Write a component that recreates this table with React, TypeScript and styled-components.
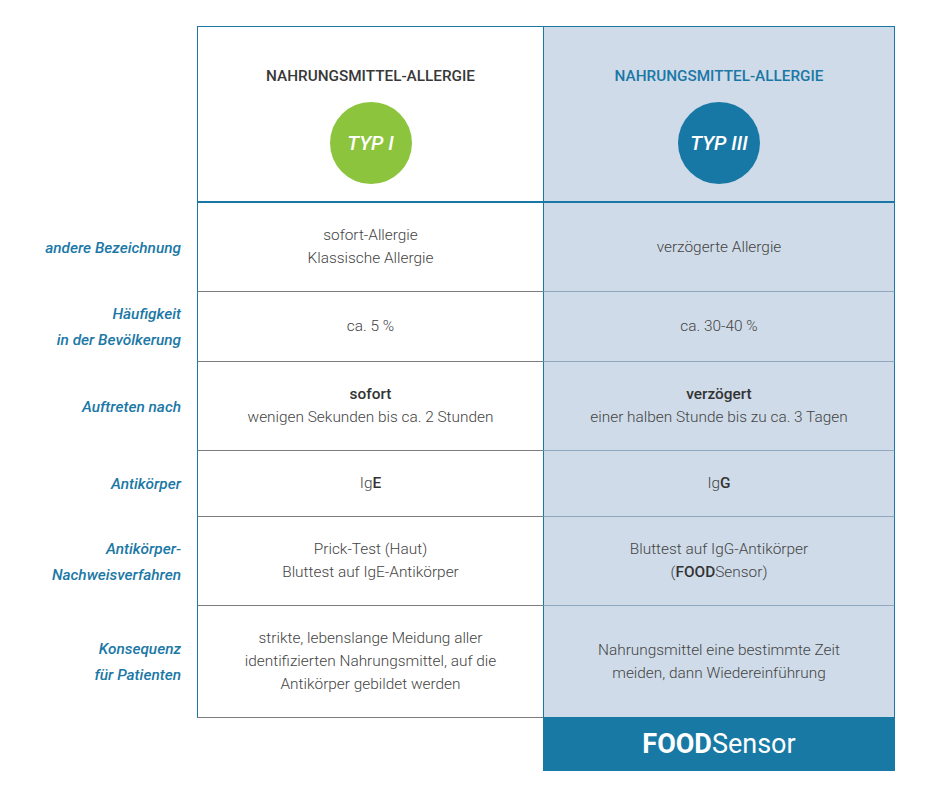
import styled, { createGlobalStyle } from "styled-components";

const BLUE = "#1b78a6";
const LIGHT = "#cfdbe8";
const TEXT = "#444444";

const GlobalStyle = createGlobalStyle`
  html, body {
    margin: 0;
    padding: 0;
    background: #ffffff;
  }
  body {
    font-family: Roboto, "Liberation Sans", sans-serif;
  }
`;

type Row = {
  label: string[];
  left: React.ReactNode;
  right: React.ReactNode;
};

const rows: Row[] = [
  {
    label: ["andere Bezeichnung"],
    left: (
      <>
        sofort-Allergie
        <br />
        Klassische Allergie
      </>
    ),
    right: "verzögerte Allergie",
  },
  {
    label: ["Häufigkeit", "in der Bevölkerung"],
    left: "ca. 5 %",
    right: "ca. 30-40 %",
  },
  {
    label: ["Auftreten nach"],
    left: (
      <>
        <Strong>sofort</Strong>
        <br />
        wenigen Sekunden bis ca. 2 Stunden
      </>
    ),
    right: (
      <>
        <Strong>verzögert</Strong>
        <br />
        einer halben Stunde bis zu ca. 3 Tagen
      </>
    ),
  },
  {
    label: ["Antikörper"],
    left: (
      <>
        Ig<Strong>E</Strong>
      </>
    ),
    right: (
      <>
        Ig<Strong>G</Strong>
      </>
    ),
  },
  {
    label: ["Antikörper-", "Nachweisverfahren"],
    left: (
      <>
        Prick-Test (Haut)
        <br />
        Bluttest auf IgE-Antikörper
      </>
    ),
    right: (
      <>
        Bluttest auf IgG-Antikörper
        <br />(<Strong>FOOD</Strong>Sensor)
      </>
    ),
  },
  {
    label: ["Konsequenz", "für Patienten"],
    left: (
      <>
        strikte, lebenslange Meidung aller
        <br />
        identifizierten Nahrungsmittel, auf die
        <br />
        Antikörper gebildet werden
      </>
    ),
    right: (
      <>
        Nahrungsmittel eine bestimmte Zeit
        <br />
        meiden, dann Wiedereinführung
      </>
    ),
  },
];

function Strong({ children }: { children: React.ReactNode }) {
  return <S.Bold>{children}</S.Bold>;
}

function App() {
  return (
    <>
      <GlobalStyle />
      <S.Table>
        <S.Empty />
        <S.HeaderCell>
          <S.HeaderTitle>Nahrungsmittel-Allergie</S.HeaderTitle>
          <S.Badge $color="#8cc43e">TYP I</S.Badge>
        </S.HeaderCell>
        <S.HeaderCell $highlight>
          <S.HeaderTitle $highlight>Nahrungsmittel-Allergie</S.HeaderTitle>
          <S.Badge $color="#1878a5">TYP III</S.Badge>
        </S.HeaderCell>

        {rows.map((row) => (
          <S.RowGroup key={row.label.join(" ")}>
            <S.Label>
              {row.label.map((line) => (
                <div key={line}>{line}</div>
              ))}
            </S.Label>
            <S.Cell>
              <S.CellText>{row.left}</S.CellText>
            </S.Cell>
            <S.Cell $highlight>
              <S.CellText>{row.right}</S.CellText>
            </S.Cell>
          </S.RowGroup>
        ))}

        <S.Empty />
        <S.Empty />
        <S.Brand>
          <b>FOOD</b>Sensor
        </S.Brand>
      </S.Table>
    </>
  );
}

export default App;

const S = {
  Table: styled.div`
    display: grid;
    grid-template-columns: 197px 346px 352px;
    width: 895px;
    margin-top: 26px;
  `,

  RowGroup: styled.div`
    display: contents;
  `,

  Empty: styled.div``,

  HeaderCell: styled.div<{ $highlight?: boolean }>`
    display: flex;
    flex-direction: column;
    align-items: center;
    gap: 16px;
    padding: 39px 0 17px;
    border-top: 1px solid ${BLUE};
    border-left: 1px solid ${BLUE};
    border-right: ${(p) => (p.$highlight ? `1px solid ${BLUE}` : "none")};
    border-bottom: 2px solid ${BLUE};
    background: ${(p) => (p.$highlight ? LIGHT : "#ffffff")};
  `,

  HeaderTitle: styled.div<{ $highlight?: boolean }>`
    font-size: 15.3px;
    line-height: 20px;
    font-weight: 500;
    text-transform: uppercase;
    color: ${(p) => (p.$highlight ? BLUE : "#383838")};
  `,

  Badge: styled.div<{ $color: string }>`
    width: 82px;
    height: 82px;
    border-radius: 50%;
    background: ${(p) => p.$color};
    display: flex;
    align-items: center;
    justify-content: center;
    color: #ffffff;
    font-size: 20px;
    font-style: italic;
    font-weight: 500;
  `,

  Label: styled.div`
    display: flex;
    flex-direction: column;
    justify-content: center;
    align-items: flex-end;
    padding: 9px 16px 9px 0;
    font-size: 15.4px;
    line-height: 26px;
    font-style: italic;
    font-weight: 500;
    color: ${BLUE};
    text-align: right;
  `,

  Cell: styled.div<{ $highlight?: boolean }>`
    display: flex;
    align-items: center;
    justify-content: center;
    padding: 21px 12px;
    border-left: 1px solid ${BLUE};
    border-right: ${(p) => (p.$highlight ? `1px solid ${BLUE}` : "none")};
    border-bottom: 1px solid ${(p) => (p.$highlight ? "#8ea7bf" : "#7d7d7d")};
    background: ${(p) => (p.$highlight ? LIGHT : "#ffffff")};
  `,

  CellText: styled.p`
    margin: 0;
    font-size: 15.4px;
    line-height: 23px;
    font-weight: 300;
    color: ${TEXT};
    text-align: center;
  `,

  Bold: styled.span`
    font-weight: 500;
    color: #333333;
  `,

  Brand: styled.div`
    height: 54px;
    display: flex;
    align-items: center;
    justify-content: center;
    background: #1779a4;
    color: #ffffff;
    font-size: 27px;
    font-weight: 400;
    margin-top: -1px;

    b {
      font-weight: 700;
    }
  `,
};
